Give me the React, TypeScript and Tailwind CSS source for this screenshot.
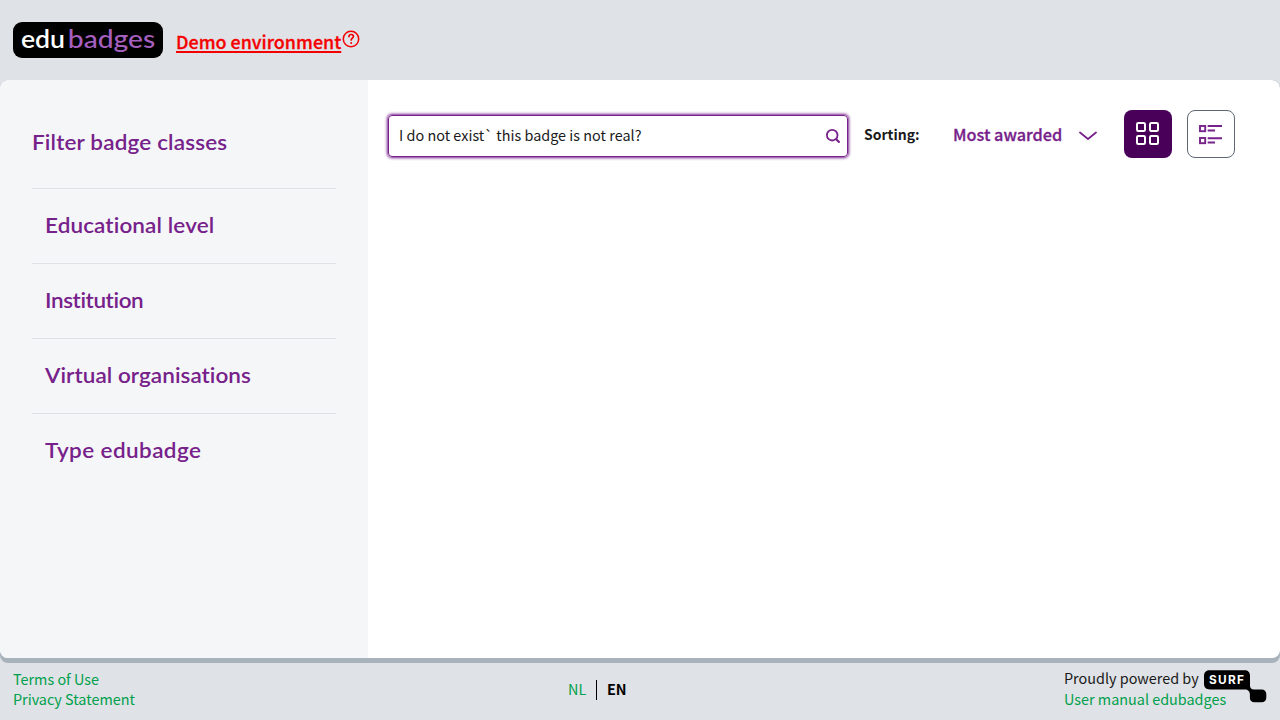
const filters = [
  { label: "Educational level", spacing: "tracking-[0.12px]" },
  { label: "Institution", spacing: "tracking-[-0.36px]" },
  { label: "Virtual organisations", spacing: "tracking-[0.06px]" },
  { label: "Type edubadge", spacing: "tracking-[0.4px]" },
];

function Logo() {
  return (
    <svg width="150" height="36" viewBox="0 0 150 36" className="block" role="img" aria-label="edubadges">
      <rect width="150" height="36" rx="9" fill="#000" />
      <g fontFamily="Lato, sans-serif" fontSize="25.5">
        <text x="8" y="26" fill="#fff" fontWeight="600" textLength="44" lengthAdjust="spacingAndGlyphs">edu</text>
        <text x="54.800" y="26" fill="#a55fbf" fontWeight="500" textLength="87.500" lengthAdjust="spacingAndGlyphs">badges</text>
      </g>
    </svg>
  );
}

function Help() {
  return (
    <svg width="18" height="18" viewBox="0 0 18 18" fill="none" stroke="#f50000" strokeWidth="1.5" strokeLinecap="round" strokeLinejoin="round">
      <circle cx="9" cy="9" r="7.7" />
      <path d="M6.9 6.6C7 5.2 7.9 4.5 9.1 4.5c1.3 0 2.3.8 2.3 2 0 1.5-2.2 1.7-2.2 3.5" strokeWidth="1.7" />
      <path d="M9.2 12.9v.1" strokeWidth="2" />
    </svg>
  );
}

function Surf() {
  return (
    <svg width="63" height="33" viewBox="0 0 63 33" className="block">
      <path d="M6 0.3h34.500c3.500 0 5.500 2 5.500 5.500v9.700c0 2.500 1.500 4 4 4h7.500c3 0 4.800 1.800 4.800 4.700v3.300c0 3-1.800 4.700-4.800 4.700h-6.800c-3.200 0-4.800-1.700-4.800-4.500v-3.200c0-3-2-5-5-5H6c-3.800 0-6-2-6-5.700V6C0 2.300 2.200.3 6 .3z" fill="#000" />
      <text x="5" y="14" fill="#fff" fontFamily="Inter, sans-serif" fontWeight="700" fontSize="11.8" textLength="35" lengthAdjust="spacing">SURF</text>
    </svg>
  );
}

export default function App() {
  return (
    <div className="flex h-[720px] w-[1280px] flex-col overflow-hidden bg-[#dfe2e6] font-['Noto_Sans_CJK_SC',sans-serif] text-[14.400px] leading-5 whitespace-nowrap text-[#1a1a1a]">
      <header className="flex h-20 shrink-0 items-start pl-[13px]">
        <div className="pt-[22px]"><Logo /></div>
        <a className="mt-[29px] ml-[13px] w-[165px] text-[17.900px] leading-6 font-medium text-[#f50000] underline decoration-2 underline-offset-2 [-webkit-text-stroke:0.3px_#f50000]">Demo environment</a>
        <div className="mt-[30px] ml-px"><Help /></div>
      </header>
      <div className="h-[583px] shrink-0 overflow-hidden rounded-lg bg-[#a8b2bb] pb-[5px]">
        <main className="flex h-[578px] overflow-hidden rounded-lg bg-white">
          <aside className="w-[368px] shrink-0 bg-[#f4f6f8] px-8 pt-[46px] font-['Lato',sans-serif] text-[21px] leading-8 font-semibold text-[#77218a]">
            <h2 className="h-[62px] origin-left scale-x-[1.07] tracking-[0.160px]">Filter badge classes</h2>
            {filters.map(({ label, spacing }) => (
              <div key={label} className="flex h-[75px] items-center border-t border-[#dfe1e4] pb-0.5 pl-[13px]">
                <span className={`origin-left scale-x-[1.07] ${spacing}`}>{label}</span>
              </div>
            ))}
          </aside>
          <section className="flex grow items-start pt-[30px] pl-5">
            <div className="mt-[5px] flex h-[42px] w-[460px] items-center justify-between rounded-[4px] border border-[#77218a] pr-[7px] pl-[10px] shadow-[0_0_3px_1px_#77218a]">
              <span className="pb-0.5 tracking-[0.020px]">I do not exist` this badge is not real?</span>
              <svg width="14" height="14" viewBox="0 0 14 14" fill="none" stroke="#77218a" strokeWidth="1.800">
                <circle cx="6.200" cy="6.200" r="5.300" />
                <path d="M10 10 13.600 13.600" strokeWidth="2.200" />
              </svg>
            </div>
            <span className="mt-[14px] ml-4 w-[89px] text-[14px] font-bold">Sorting:</span>
            <span className="mt-[14px] w-[126px] text-[16.300px] font-medium text-[#77218a] [-webkit-text-stroke:0.3px_#77218a]">Most awarded</span>
            <svg className="mt-[21px]" width="18" height="10" viewBox="0 0 18 10" fill="none" stroke="#77218a" strokeWidth="1.800" strokeLinecap="round" strokeLinejoin="round">
              <path d="M1 1.500 9 8l8-6.500" />
            </svg>
            <button className="ml-[27px] flex size-12 items-center justify-center rounded-lg bg-[#480058]">
              <svg width="24" height="24" viewBox="0 0 24 24" fill="none" stroke="#fff" strokeWidth="2">
                <rect x="1" y="1" width="8" height="8" rx="1.300" /><rect x="14" y="1" width="8" height="8" rx="1.300" />
                <rect x="1" y="14" width="8" height="8" rx="1.300" /><rect x="14" y="14" width="8" height="8" rx="1.300" />
              </svg>
            </button>
            <button className="ml-[15px] flex size-12 items-center justify-center rounded-lg border border-[#5d6874]">
              <svg width="24" height="22" viewBox="0 0 24 22" fill="none" stroke="#77218a" strokeWidth="1.900">
                <rect x="1" y="3" width="5.200" height="5.200" /><rect x="1" y="15" width="5.200" height="5.200" />
                <path d="M8.700 3H23M8.700 7.500H16M8.700 15.200H23M8.700 19.500H16" />
              </svg>
            </button>
          </section>
        </main>
      </div>
      <footer className="flex h-[57px] items-start pl-[13px]">
        <div className="mt-[6px] w-[555px] text-[#00a04c]"><div>Terms of Use</div><div>Privacy Statement</div></div>
        <div className="mt-[16px] flex w-[496px]">
          <span className="w-[28px] text-[#00a04c]">NL</span>
          <span className="mt-px h-5 w-[11px] border-l border-black" />
          <span className="font-bold text-black">EN</span>
        </div>
        <div className="mt-[5px] w-[140px]">
          <div>Proudly powered by</div>
          <div className="mt-px text-[#00a04c]">User manual edubadges</div>
        </div>
        <div className="mt-[7px]"><Surf /></div>
      </footer>
    </div>
  );
}
